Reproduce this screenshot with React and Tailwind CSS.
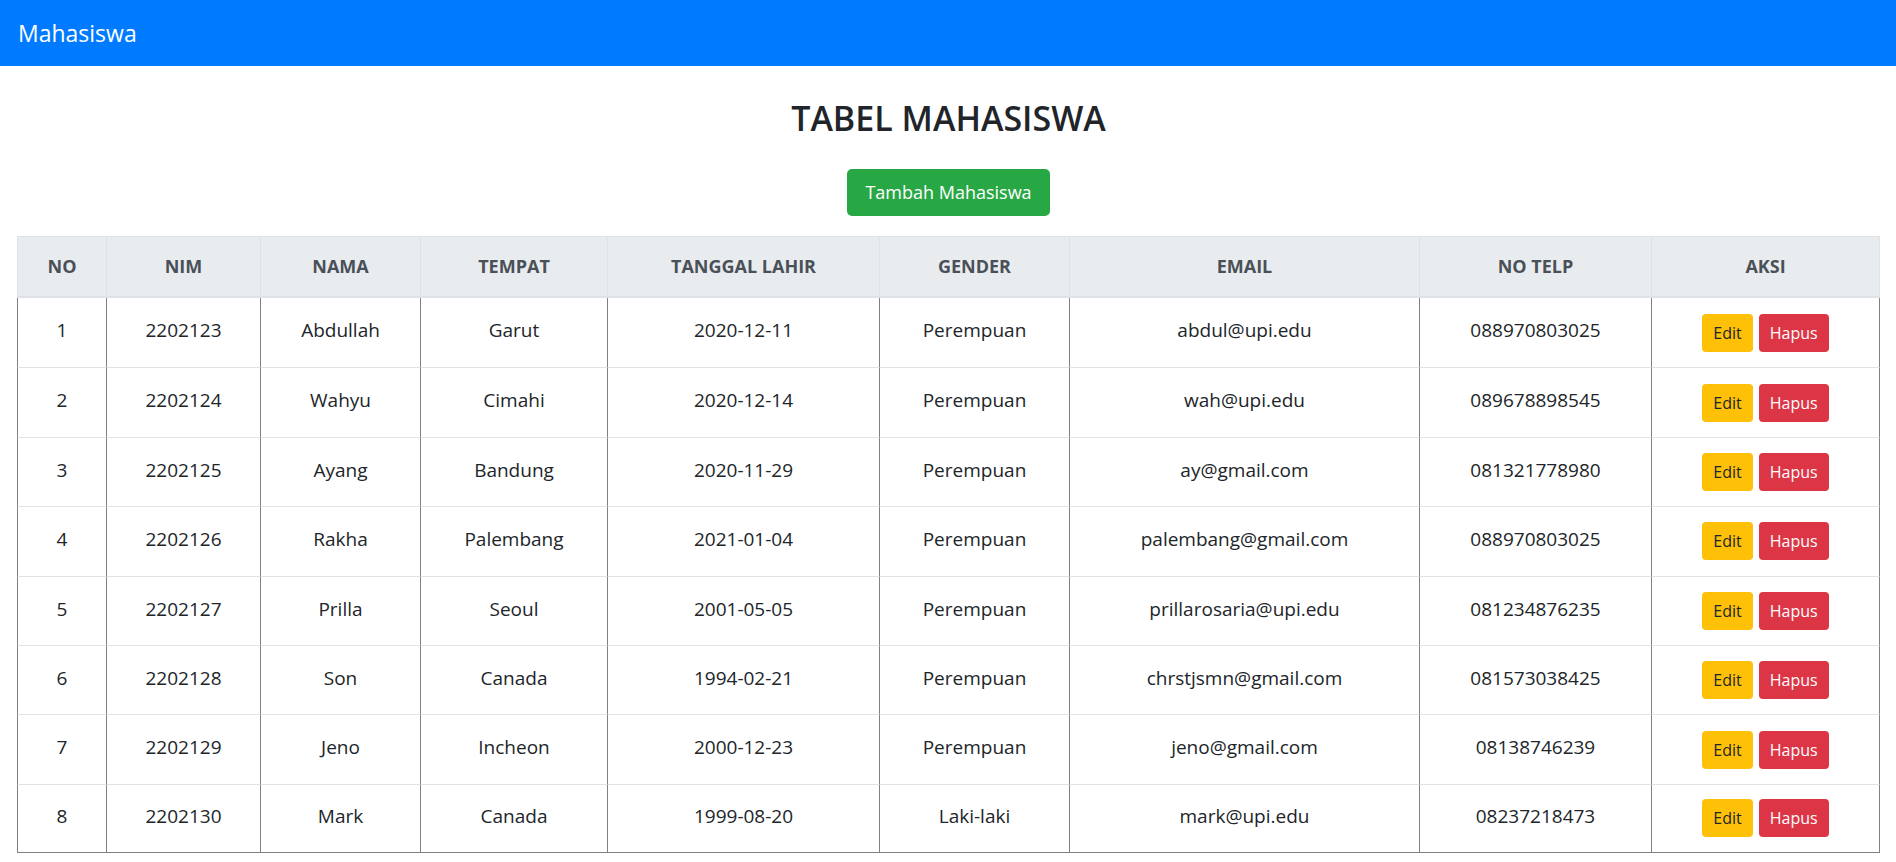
import React from "react";

const mahasiswa = [
  { no: 1, nim: "2202123", nama: "Abdullah", tempat: "Garut", lahir: "2020-12-11", gender: "Perempuan", email: "abdul@upi.edu", telp: "088970803025" },
  { no: 2, nim: "2202124", nama: "Wahyu", tempat: "Cimahi", lahir: "2020-12-14", gender: "Perempuan", email: "wah@upi.edu", telp: "089678898545" },
  { no: 3, nim: "2202125", nama: "Ayang", tempat: "Bandung", lahir: "2020-11-29", gender: "Perempuan", email: "ay@gmail.com", telp: "081321778980" },
  { no: 4, nim: "2202126", nama: "Rakha", tempat: "Palembang", lahir: "2021-01-04", gender: "Perempuan", email: "palembang@gmail.com", telp: "088970803025" },
  { no: 5, nim: "2202127", nama: "Prilla", tempat: "Seoul", lahir: "2001-05-05", gender: "Perempuan", email: "prillarosaria@upi.edu", telp: "081234876235" },
  { no: 6, nim: "2202128", nama: "Son", tempat: "Canada", lahir: "1994-02-21", gender: "Perempuan", email: "chrstjsmn@gmail.com", telp: "081573038425" },
  { no: 7, nim: "2202129", nama: "Jeno", tempat: "Incheon", lahir: "2000-12-23", gender: "Perempuan", email: "jeno@gmail.com", telp: "08138746239" },
  { no: 8, nim: "2202130", nama: "Mark", tempat: "Canada", lahir: "1999-08-20", gender: "Laki-laki", email: "mark@upi.edu", telp: "08237218473" },
];

const headers = ["NO", "NIM", "NAMA", "TEMPAT", "TANGGAL LAHIR", "GENDER", "EMAIL", "NO TELP", "AKSI"];
const widths = [89, 154, 160, 187, 272, 190, 350, 232, 229];

export default function App() {
  return (
    <div className="min-h-screen bg-white text-[#212529] font-['Open_Sans',sans-serif]">
      {/* Navbar */}
      <nav className="h-[66px] bg-[#007bff] px-[18px] flex items-center">
        <span className="text-white text-[23px]">Mahasiswa</span>
      </nav>

      <main className="pl-[17px] pr-[16px]">
        <h1 className="mt-[31px] text-center text-[34px] leading-[42px] font-semibold text-[#212529]">
          TABEL MAHASISWA
        </h1>

        <div className="mt-[30px] flex justify-center">
          <button className="h-[47px] w-[203px] rounded-[5px] bg-[#28a745] text-white text-[18px]">
            Tambah Mahasiswa
          </button>
        </div>

        {/* Table */}
        <table className="mt-[20px] w-full table-fixed border-separate border-spacing-0 text-center">
          <colgroup>
            {widths.map((w, i) => (
              <col key={i} style={{ width: w }} />
            ))}
          </colgroup>
          <thead>
            <tr>
              {headers.map((h, i) => (
                <th
                  key={h}
                  className={
                    "h-[62px] bg-[#e9ecef] text-[#495057] text-[18px] font-bold border-l border-t border-b-2 border-[#dee2e6]" +
                    (i === headers.length - 1 ? " border-r" : "")
                  }
                >
                  {h}
                </th>
              ))}
            </tr>
          </thead>
          <tbody>
            {mahasiswa.map((m, r) => {
              const last = r === mahasiswa.length - 1;
              const cell =
                "h-[69.4px] text-[19px] border-l border-[#808080] " +
                (r === 0 ? "" : "border-t border-t-[#dee2e6] ") +
                (last ? "border-b " : "");
              const text = cell + "pb-[4px]";
              return (
                <tr key={m.no}>
                  <td className={text}>{m.no}</td>
                  <td className={text}>{m.nim}</td>
                  <td className={text}>{m.nama}</td>
                  <td className={text}>{m.tempat}</td>
                  <td className={text}>{m.lahir}</td>
                  <td className={text}>{m.gender}</td>
                  <td className={text}>{m.email}</td>
                  <td className={text}>{m.telp}</td>
                  <td className={cell + "border-r"}>
                    <div className="flex justify-center gap-[6px]">
                      <button className="h-[38px] px-[11px] rounded-[4px] bg-[#ffc107] text-[#212529] text-[16px]">
                        Edit
                      </button>
                      <button className="h-[38px] px-[11px] rounded-[4px] bg-[#dc3545] text-white text-[16px]">
                        Hapus
                      </button>
                    </div>
                  </td>
                </tr>
              );
            })}
          </tbody>
        </table>
      </main>
    </div>
  );
}
